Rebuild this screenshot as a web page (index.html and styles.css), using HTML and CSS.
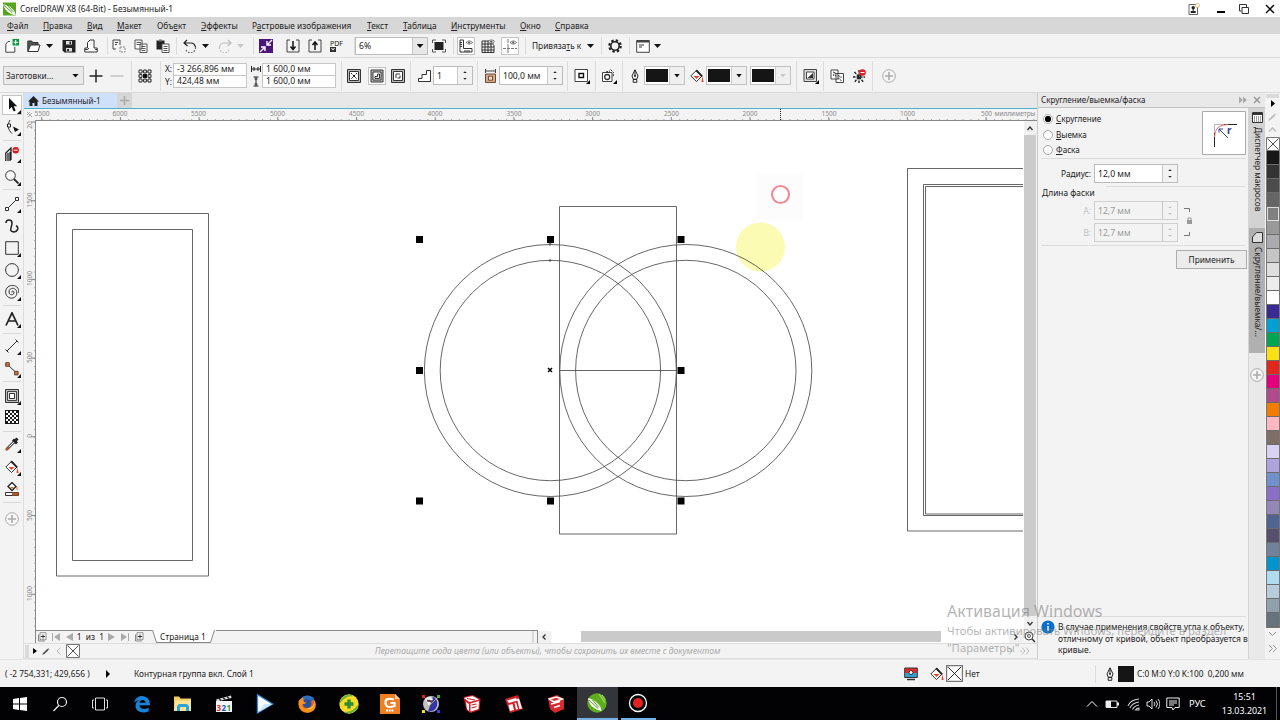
FILE: index.html
```html
<!DOCTYPE html>
<html lang="ru">
<head>
  <meta charset="UTF-8" />
  <title>CorelDRAW X8 (64-Bit) - Безымянный-1</title>
  <link rel="stylesheet" href="styles.css">
</head>
<body>

  <!-- Shared icons -->
  <svg class="defs">
    <symbol id="pen" viewBox="0 0 14 14"><path d="M7 .8L4 7l1.300 3.200h3.400L10 7zM7 1v6M5.200 10.500v2.800h3.600v-2.800z" fill="#f8f8f8" stroke="#222"/><circle cx="7" cy="7" r="1" fill="#222"/></symbol>
    <symbol id="bucket" viewBox="0 0 14 14"><path d="M.8 7l6-6L12 7l-5.500 5.500z" fill="#fff" stroke="#333"/><path d="M6.500.5L13 7l-1.600 1L5.500 2z" fill="#222"/><path d="M3.500 7h6L6.500 10z" fill="#e4472b"/><path d="M12.200 7.500l1.500 5.500h-2.200z" fill="#e4472b"/></symbol>
    <symbol id="plus-circle" viewBox="0 0 14 14"><circle cx="7" cy="7" r="6.300" fill="#f6f6f6" stroke="#aaa"/><path d="M7 3v8M3 7h8" stroke="#aaa" stroke-width="1.600"/></symbol>
    <symbol id="no-color" viewBox="0 0 14 14"><path d="M.5.5h13v13H.5z" fill="#fff" stroke="#777"/><path d="M1.500 1.500l11 11M12.500 1.500l-11 11" stroke="#222" stroke-width=".8"/></symbol>
    <symbol id="eye" viewBox="0 0 8 5"><path d="M.5 2.500Q4-1 7.500 2.500Q4 6 .5 2.500z" fill="#fff" stroke="#555" stroke-width=".8"/><circle cx="4" cy="2.500" r="1.200" fill="#555"/></symbol>
    <symbol id="pencil" viewBox="0 0 10 10"><path d="M.8 9.200L2.500 7 7 2.500 8 3.500 3.500 8zM7.500 1.500l1.500 1.500" fill="currentColor" stroke="currentColor" stroke-width=".8"/></symbol>
    <symbol id="addpage" viewBox="0 0 10 10"><path d="M1.500 2.500v6.500h6.500" fill="none" stroke="#888"/><path d="M3 .7h6v7H3z" fill="#fafafa" stroke="#777" stroke-width=".8"/><path d="M6 2.500v4M4 4.500h4" stroke="#333"/></symbol>
  </svg>

  <!-- Title bar -->
  <div class="titlebar">
    <svg class="logo" viewBox="0 0 14 14"><path d="M0 0h14v14H0z" fill="#56a51f"/><path d="M0 2Q7 3 12 9l2 5-6-2Q2 9 0 2z" fill="#fff"/><path d="M1 3l9 8M4 2.500l7 7.500" stroke="#4a961b"/></svg>
    <span class="app-name">CorelDRAW X8 (64-Bit) - Безымянный-1</span>
    <div class="window-buttons">
      <svg width="12" height="12" viewBox="0 0 12 12"><path d="M1 1.500h8.500v10H1z" fill="#fff" stroke="#666"/><circle cx="5.200" cy="4.700" r="1.700" fill="#222"/><path d="M4.700 5h1v3h2v2h-5V8h2z" fill="#222"/><circle cx="9.500" cy="2.500" r="2" fill="#fff" stroke="#e8913b" stroke-dasharray="1 .5"/></svg>
      <svg class="minimize" width="10" height="10" viewBox="0 0 10 10"><path d="M1 8h8" stroke="#000" stroke-width="2"/></svg>
      <svg width="12" height="12" viewBox="0 0 12 12"><path d="M3.500 8H1.500V1.500h7V4M4 4.500h6.500v6H4z" fill="#fff" stroke="#333"/></svg>
      <svg width="10" height="10" viewBox="0 0 10 10"><path d="M1 1l8 8M9 1L1 9" stroke="#000" stroke-width="1.400"/></svg>
    </div>
  </div>

  <!-- Menu -->
  <div class="menu">
    <span><u>Ф</u>айл</span><span><u>П</u>равка</span><span><u>В</u>ид</span><span><u>М</u>акет</span><span>Объ<u>е</u>кт</span><span><u>Э</u>ффекты</span><span>Р<u>а</u>стровые изображения</span><span><u>Т</u>екст</span><span><u>Т</u>аблица</span><span><u>И</u>нструменты</span><span><u>О</u>кно</span><span><u>С</u>правка</span>
  </div>

  <!-- Standard toolbar -->
  <div class="bar toolbar">
    <svg class="ic" viewBox="0 0 14 14"><path d="M5 2.500H3L.8 5v8.200h9V8" fill="#fff" stroke="#444"/><path d="M7.500 0H14v6.500H7.500z" fill="#0d9545"/><path d="M10.700 1v4.500M8.500 3.200H13" stroke="#fff"/></svg>
    <svg class="ic" viewBox="0 0 14 14"><path d="M.8 12.500V2h4l1 1.500H11V6" fill="#555" stroke="#333"/><path d="M3.500 6H13l-2 6.500H1z" fill="#fff" stroke="#333"/></svg>
    <i class="caret"></i>
    <svg class="ic" viewBox="0 0 14 14"><path d="M.5 1h13v12.500h-11l-2-2z" fill="#222"/><path d="M4 2h6v3.500H4zM4 9h6v3.500H4z" fill="#ddd"/><path d="M7.500 2.500h1.500v2.500H7.500zM5 10h2v2H5z" fill="#222"/></svg>
    <svg class="ic" viewBox="0 0 14 14"><path d="M3.500 9V3.500L6 1h4v8M3.500 9H.8v4h12.400V9H10M.8 10.500h3L5 9M13.200 10.500h-2" fill="#fff" stroke="#333"/></svg>
    <i class="sep"></i>
    <svg class="ic" viewBox="0 0 14 14"><path d="M1 10V1h7v5M3 3.500h3M3 5.500h2M1 10h3" fill="none" stroke="#444"/><path d="M8 8h5v5H8z" fill="none" stroke="#888" stroke-dasharray="2 1"/></svg>
    <svg class="ic" viewBox="0 0 14 14"><path d="M1 1h7v9H1zM2.500 3.500H7M2.500 5.500H7M6 5h7v8.500H6zM7.500 7.500h4M7.500 9.500h4M7.500 11.500h4" fill="#fff" stroke="#555"/></svg>
    <svg class="ic" viewBox="0 0 14 14"><path d="M.5 1.500h8v9h-8z" fill="#222"/><path d="M3 .5h3v2H3z" fill="#777"/><path d="M6 5h7v8.500H6zM7.500 7.500h4M7.500 9.500h4M7.500 11.500h4" fill="#fff" stroke="#555"/></svg>
    <i class="sep"></i>
    <svg class="ic" viewBox="0 0 14 14"><path d="M4 1L1 4l3.500 3M1.500 4H8a4.500 4.500 0 0 1 4.500 4.500" fill="none" stroke="#222" stroke-width="1.200"/><path d="M12.500 8.500A5 5 0 0 1 3 11" fill="none" stroke="#555" stroke-width="1.200" stroke-dasharray="1.500 1.500"/></svg>
    <i class="caret"></i>
    <svg class="ic" viewBox="0 0 14 14"><path d="M10 1l3 3-3.500 3M12.500 4H6a4.500 4.500 0 0 0-4.500 4.500" fill="none" stroke="#bbb" stroke-width="1.200"/><path d="M1.500 8.500A5 5 0 0 0 11 11" fill="none" stroke="#bbb" stroke-width="1.200" stroke-dasharray="1.500 1.500"/></svg>
    <i class="caret off"></i>
    <i class="sep"></i>
    <svg class="ic" viewBox="0 0 14 14"><path d="M0 0h14v14H0z" fill="#4b1477"/><path d="M13 1L9 5M8 2v4h4M1 13l4-4M2 8h4v4" fill="none" stroke="#fff" stroke-width="1.400"/></svg>
    <svg class="ic" viewBox="0 0 14 14"><path d="M4 1H1v12h12V1h-3" fill="none" stroke="#444"/><path d="M7 2v8M4.500 7.500L7 10.500l2.500-3" fill="none" stroke="#111" stroke-width="1.500"/></svg>
    <svg class="ic" viewBox="0 0 14 14"><path d="M4 1H1v12h12V1h-3" fill="none" stroke="#444"/><path d="M7 11V3M4.500 6L7 3l2.500 3" fill="none" stroke="#111" stroke-width="1.500"/></svg>
    <div class="pdf">PDF<svg width="6" height="5" viewBox="0 0 6 5"><path d="M0 0h6v5H0z" fill="#333"/><path d="M1.500 1l1.500 2 1.500-2" stroke="#fff" fill="none"/></svg></div>
    <i class="sep"></i>
    <div class="field zoom-field"><span>6%</span><b><i class="caret"></i></b></div>
    <svg class="ic" viewBox="0 0 14 14"><path d="M2.500 3h9v8h-9z" fill="#222"/><path d="M.5 4V1H4M10 1h3.500v3M13.500 10v3H10M4 13H.5v-3" fill="none" stroke="#555"/></svg>
    <i class="sep"></i>
    <div class="pressed"><svg class="ic" viewBox="0 0 14 14"><path d="M1 1h3.500v8.500H13V13H1z" fill="#fff" stroke="#333"/><path d="M1 3.500h2M1 5.500h2M1 7.500h2M6 13v-2M8 13v-2M10 13v-2" stroke="#333"/><use href="#eye" x="6.500" y="1" width="7.500" height="5"/></svg></div>
    <svg class="ic" viewBox="0 0 14 14"><path d="M1 2v11.500M4 2v11.500M7 2v11.500M10 2v11.500M13 6v7.500M1 2h12M1 5h12M1 8h12M1 11h12M1 13.500h12" stroke="#333"/><use href="#eye" x="6.500" y="0" width="7.500" height="5"/></svg>
    <div class="pressed"><svg class="ic" viewBox="0 0 14 14"><path d="M5 0v14" stroke="#777" stroke-dasharray="4 1"/><path d="M0 9.500h14" stroke="#777" stroke-dasharray="3 1"/><use href="#eye" x="6.500" y="1" width="7.500" height="5"/></svg></div>
    <i class="sep"></i>
    <span class="snap">Привяза<u>т</u>ь к</span>
    <i class="caret"></i>
    <i class="sep"></i>
    <svg class="ic" viewBox="0 0 14 14"><circle cx="7" cy="7" r="5.700" fill="none" stroke="#222" stroke-width="2.200" stroke-dasharray="2.400 2.080"/><circle cx="7" cy="7" r="4.200" fill="none" stroke="#222" stroke-width="1.600"/></svg>
    <i class="sep"></i>
    <svg class="ic" viewBox="0 0 14 14"><path d="M.7 1.500h12.600v11.800H.7z" fill="#fff" stroke="#444"/><path d="M.7 2.500h12.600" stroke="#444" stroke-width="2"/><path d="M3 6h5M3 8h3" stroke="#333"/></svg>
    <i class="caret"></i>
  </div>

  <!-- Property bar -->
  <div class="bar props">
    <div class="preset"><span>Заготовки...</span><i class="caret"></i></div>
    <svg class="ic" viewBox="0 0 14 14"><path d="M7 .5v13M.5 7h13" stroke="#222" stroke-width="1.500"/></svg>
    <svg class="ic" viewBox="0 0 14 14"><path d="M.5 7h13" stroke="#b5b5b5" stroke-width="1.200"/></svg>
    <i class="sep"></i>
    <svg class="ic" viewBox="0 0 14 14"><path d="M2.500 2.500h9v9h-9z" fill="none" stroke="#222" stroke-dasharray="1 1"/><path d="M1 1h3v3H1zM5.700 1h2.600v3H5.700zM10 1h3v3h-3zM1 5.700h3v2.600H1zM10 5.700h3v2.600h-3zM1 10h3v3H1zM5.700 10h2.600v3H5.700zM10 10h3v3h-3z" fill="#fff" stroke="#222"/><path d="M5 5h4v4H5z" fill="#111"/></svg>
    <i class="sep"></i>
    <div class="pair"><span>X:</span><em>-3 266,896 мм</em><span>Y:</span><em>424,48 мм</em></div>
    <div class="pair size">
      <svg width="10" height="8" viewBox="0 0 10 8"><path d="M.5 1v6M9.500 1v6M1 4h8M3 2v4M7 2v4" stroke="#222"/></svg><em>1 600,0 мм</em>
      <svg width="10" height="11" viewBox="0 0 10 11"><path d="M2.500 1h5M2.500 10h5M5 1v9M3.500 3h3M3.500 8h3" stroke="#222"/></svg><em>1 600,0 мм</em>
    </div>
    <i class="sep"></i>
    <svg class="ic" viewBox="0 0 14 14"><path d="M.5.5h13v13H.5z" fill="#bbb" stroke="#333"/><path d="M2.500 2.500h9v9h-9z" fill="#fff" stroke="#333"/><path d="M4 4l6 6M10 4l-6 6" stroke="#222" stroke-dasharray="2 1"/><path d="M6 6h2v2H6z" fill="#222"/></svg>
    <div class="pressed"><svg class="ic" viewBox="0 0 14 14"><path d="M1 1h12v12H1z" fill="#bbb" stroke="#333"/><path d="M3 3h8v8H3z" fill="#fff" stroke="#333"/><path d="M5 9.500h4.500V5H7.500v2.500H5z" fill="#eee" stroke="#333"/></svg></div>
    <svg class="ic" viewBox="0 0 14 14"><path d="M.5.5h13v13H.5z" fill="#bbb" stroke="#333"/><path d="M2.500 2.500h9v9h-9z" fill="#fff" stroke="#333"/><path d="M5 9V5h4M9 6.500V9H6.500" fill="none" stroke="#333"/></svg>
    <i class="sep"></i>
    <svg class="ic" viewBox="0 0 14 14"><path d="M.5 12.500V9.500H4V5.500h4.500v-4h4v11z" fill="#fff" stroke="#333"/></svg>
    <div class="field spin steps"><span>1</span><b></b></div>
    <i class="sep"></i>
    <svg class="ic" viewBox="0 0 14 14"><path d="M1.500 0v4M11.500 0v4M2 2h9" stroke="#444"/><path d="M1.500 5h10v8.500h-10z" fill="#d9a983" stroke="#6a4a3c"/><path d="M4.500 7.200h4v4h-4z" fill="#f4dccb" stroke="#6a4a3c"/></svg>
    <div class="field spin offset"><span>100,0 мм</span><b></b></div>
    <i class="sep"></i>
    <svg class="ic fly-ic" viewBox="0 0 16 16"><path d="M1 1.500h12.500v12H1z" fill="#fff" stroke="#444"/><path d="M5 5.500h4.500v4H5z" fill="#fff" stroke="#111" stroke-width="1.400"/><path d="M16 12v4h-4z"/></svg>
    <i class="sep"></i>
    <svg class="ic fly-ic" viewBox="0 0 16 16"><path d="M1.500 4.500h9.500v9H1.500z" fill="#fff" stroke="#444"/><circle cx="6.200" cy="9" r="2.500" fill="none" stroke="#333" stroke-width="1.300"/><path d="M5 4l4-1M9.500 1.500l3 3L12 9" fill="none" stroke="#222" stroke-dasharray="2 1"/><path d="M16 12v4h-4z"/></svg>
    <i class="sep"></i>
    <svg class="ic"><use href="#pen"/></svg>
    <div class="color"><s></s><b><i class="caret"></i></b></div>
    <svg class="ic"><use href="#bucket"/></svg>
    <div class="color"><s></s><b><i class="caret"></i></b></div>
    <div class="color disabled"><s></s><b><i class="caret off"></i></b></div>
    <i class="sep"></i>
    <svg class="ic fly-ic" viewBox="0 0 16 16"><path d="M1 1.500h12.500v12H1z" fill="#ddd" stroke="#444"/><path d="M3.500 4h7.500v7H3.500z" fill="#fff" stroke="#444"/><path d="M10 5v5H4.500z" fill="#333"/><path d="M16 12v4h-4z"/></svg>
    <i class="sep"></i>
    <svg class="ic" viewBox="0 0 14 14"><path d="M1 1h7v9H1zM6 4.500h7.500v9H6z" fill="#fff" stroke="#444"/><path d="M3 3l3 1-3 2 3 1M8 6.500l3.500 1.500-3 2 3 1.500" fill="none" stroke="#333" stroke-dasharray="2 1"/></svg>
    <svg class="ic" viewBox="0 0 14 14"><path d="M7 1v13M1 8h12M2.500 3l9 10M11.500 3l-9 10" stroke="#222" stroke-width="1.400" stroke-dasharray="2.500 1"/><circle cx="10.500" cy="3.500" r="3.300" fill="#e01b22"/><path d="M8.500 3.500h4" stroke="#fff"/></svg>
    <i class="sep"></i>
    <svg class="ic"><use href="#plus-circle"/></svg>
  </div>

  <div class="workspace">
    <!-- Toolbox -->
    <div class="toolbox">
      <div class="tool active fly"><svg class="ic" viewBox="0 0 14 14"><path d="M4 0v11.500l2.700-2.500 2 4.500 2-1-2-4.200h3.500z" fill="#111"/></svg></div>
      <div class="tool fly"><svg class="ic" viewBox="0 0 14 14"><path d="M5 0C2 5 3 10 7 13.500" fill="none" stroke="#333"/><path d="M2.500 4h3v3h-3z" fill="#fff" stroke="#222"/><path d="M8 6.500l6 3-4 2.500z" fill="#111"/></svg></div>
      <i class="hsep"></i>
      <div class="tool fly"><svg class="ic" viewBox="0 0 14 14"><path d="M.8 14V6L6 1v12M3 14V6M5 14V5" fill="none" stroke="#222" stroke-width="1.300"/><circle cx="10.700" cy="3.200" r="3.200" fill="#d81920"/><path d="M8.700 3.200h4" stroke="#fff"/></svg></div>
      <div class="tool fly"><svg class="ic" viewBox="0 0 14 14"><circle cx="5.500" cy="5.500" r="4.800" fill="#fafafa" stroke="#333"/><path d="M9 9l4.500 4.500" stroke="#222" stroke-width="1.800"/></svg></div>
      <i class="hsep"></i>
      <div class="tool fly"><svg class="ic" viewBox="0 0 14 14"><path d="M2 12L12 2" stroke="#333"/><path d="M.5 10.500h3v3h-3zM10.500.5h3v3h-3z" fill="#fff" stroke="#333"/></svg></div>
      <div class="tool"><svg class="ic" viewBox="0 0 14 14"><path d="M1 4C1 0 7 0 7 4S3.500 12 8 12.800s6.500-4.500 3-6" fill="none" stroke="#222" stroke-width="1.500"/></svg></div>
      <div class="tool fly"><svg class="ic" viewBox="0 0 14 14"><path d="M.7.7h12.600v12.600H.7z" fill="none" stroke="#333"/></svg></div>
      <div class="tool fly"><svg class="ic" viewBox="0 0 14 14"><circle cx="7" cy="7" r="6.400" fill="none" stroke="#333"/></svg></div>
      <div class="tool fly"><svg class="ic" viewBox="0 0 14 14"><path d="M7 7.500C6 5.500 9.500 5.500 9 8S4 10.500 4 7s4-5 6.500-2.500S12 12 8 13 0 10.500.7 6 6-.5 9.500.7s4.500 4 4 7" fill="none" stroke="#333"/></svg></div>
      <i class="hsep"></i>
      <div class="tool fly"><svg class="ic" viewBox="0 0 14 14"><path d="M1 13.500L7 .8l6 12.700M3.300 9h7.400" fill="none" stroke="#222" stroke-width="1.700"/></svg></div>
      <i class="hsep"></i>
      <div class="tool fly"><svg class="ic" viewBox="0 0 14 14"><path d="M2 12L12 2M.5 10.500l3 3M10.500.5l3 3" stroke="#333"/></svg></div>
      <div class="tool fly"><svg class="ic" viewBox="0 0 14 14"><path d="M2 2l10 9.500" stroke="#333"/><path d="M.7.700h3.600v3.600H.7zM9.500 9.300h3.600v3.600H9.500z" fill="#c8723e" stroke="#6b4530"/></svg></div>
      <i class="hsep"></i>
      <div class="tool fly"><svg class="ic" viewBox="0 0 14 14"><path d="M.5.5h13v13H.5z" fill="#bbb" stroke="#333"/><path d="M2.500 2.500h9v9h-9z" fill="#ddd" stroke="#444"/><path d="M4.500 4.500h5v5h-5z" fill="#fff" stroke="#333"/></svg></div>
      <div class="tool"><svg class="ic" viewBox="0 0 14 14"><defs><pattern id="checks" width="4" height="4" x="1" y="1" patternUnits="userSpaceOnUse"><path d="M0 0h2v2H0zM2 2h2v2H2z" fill="#fff"/></pattern></defs><path d="M0 0h14v14H0z" fill="#1a1a1a"/><path d="M1 1h12v12H1z" fill="url(#checks)"/></svg></div>
      <i class="hsep"></i>
      <div class="tool fly"><svg class="ic" viewBox="0 0 14 14"><path d="M1.500 12.500L9 5" stroke="#555" stroke-width="3"/><path d="M3.500 10.500L9 5" stroke="#fff"/><path d="M8 2.500l4 4M9 5l3.500-3.500" stroke="#222" stroke-width="3"/><path d="M.8 13.200l3-3" stroke="#b5562a" stroke-width="2"/></svg></div>
      <div class="tool fly"><svg class="ic"><use href="#bucket"/></svg></div>
      <div class="tool"><svg class="ic" viewBox="0 0 14 14"><path d="M3 4.500L7 .5l4 4-4 4z" fill="#fff" stroke="#222" stroke-width="1.300"/><path d="M5 5h4L7 7z" fill="#d76628"/><path d="M12 5v3" stroke="#d76628"/><path d="M.5 10.500h13v3H.5z" fill="#fff" stroke="#333"/><path d="M7 10.500h6.500v3H7z" fill="#b5562a"/></svg></div>
      <i class="hsep"></i>
      <svg class="ic"><use href="#plus-circle"/></svg>
    </div>

    <!-- Document -->
    <div class="document">
      <div class="tabs">
        <div class="tab"><svg width="11" height="10" viewBox="0 0 11 10"><path d="M0 5.500L5.500 0 11 5.500H9.500V10h-3V7h-2v3h-3V5.500z" fill="#222"/></svg>Безымянный-1</div>
        <div class="tab-add"><svg width="9" height="9" viewBox="0 0 9 9"><path d="M4.500 0v9M0 4.500h9" stroke="#aaa" stroke-width="1.600"/></svg></div>
      </div>
      <svg class="ruler-top" viewBox="24 109 1013 12">
        <defs>
          <pattern id="ticks-x" x="41.700" y="118" width="7.870" height="3" patternUnits="userSpaceOnUse"><path d="M.5 1v2" stroke="#aaa"/></pattern>
          <pattern id="major-x" x="41.200" y="116" width="78.700" height="5" patternUnits="userSpaceOnUse"><path d="M.5 1v4" stroke="#888"/></pattern>
        </defs>
        <path d="M27 112l5 5M27 115l3-3M28 117l4-4" stroke="#999" stroke-width=".8" fill="none"/>
        <rect x="36" y="118" width="1000" height="3" fill="url(#ticks-x)"/>
        <rect x="36" y="116" width="1000" height="5" fill="url(#major-x)"/>
        <path d="M35 120.500h1002" stroke="#888"/>
        <g class="ruler-text">
          <text x="42">5500</text><text x="120">6000</text><text x="198.500">5500</text><text x="277.500">5000</text><text x="356.500">4500</text><text x="435">4000</text><text x="514">3500</text><text x="592.500">3000</text><text x="671.500">2500</text><text x="750">2000</text><text x="829">1500</text><text x="907.500">1000</text><text x="986.500">500</text><text x="1015">миллиметры</text>
        </g>
        <path d="M780.500 109v12" stroke="#222" stroke-dasharray="1 1"/>
      </svg>
      <div class="canvas-row">
        <svg class="ruler-left" viewBox="24 121 12 509">
          <defs>
            <pattern id="ticks-y" x="33" y="122" width="3" height="7.870" patternUnits="userSpaceOnUse"><path d="M1 .5h2" stroke="#aaa"/></pattern>
            <pattern id="major-y" x="31" y="121.500" width="5" height="78.700" patternUnits="userSpaceOnUse"><path d="M0 .5h5" stroke="#888"/></pattern>
          </defs>
          <rect x="33" y="121" width="3" height="509" fill="url(#ticks-y)"/>
          <rect x="31" y="121" width="5" height="509" fill="url(#major-y)"/>
          <path d="M35.500 121v509" stroke="#888"/>
          <g class="ruler-text">
            <text transform="translate(31.500 125) rotate(-90)">20</text><text transform="translate(31.500 200) rotate(-90)">1500</text><text transform="translate(31.500 278.500) rotate(-90)">1000</text><text transform="translate(31.500 357.500) rotate(-90)">500</text><text transform="translate(31.500 436) rotate(-90)">0</text><text transform="translate(31.500 515.500) rotate(-90)">500</text><text transform="translate(31.500 593.500) rotate(-90)">1000</text>
          </g>
        </svg>
        <svg class="canvas" viewBox="36 121 988 509">
          <path d="M756 174h47v46h-47z" fill="#fcfcfc"/>
          <circle cx="760.500" cy="247" r="24.500" fill="#fbfbb4"/>
          <g class="shapes">
            <path d="M56.500 213.500h152v362.500h-152zM72.500 229.500h120v331h-120z"/>
            <path d="M559.500 206.500h117v327.500h-117zM559.500 370.500h117"/>
            <circle cx="550.400" cy="370.500" r="126"/><circle cx="550.400" cy="370.500" r="110.200"/>
            <circle cx="685.800" cy="370.500" r="126"/><circle cx="685.800" cy="370.500" r="110.200"/>
            <path d="M1023 168.500H907.500v362.500H1023M1023 184.500H923.500v331H1023M1023 186.500H925.500v327.500H1023"/>
          </g>
          <path d="M416 236h7v7h-7zM547 236h7v7h-7zM677.500 236h7v7h-7zM416 367h7v7h-7zM677.500 367h7v7h-7zM416 497.500h7v7h-7zM547 497.500h7v7h-7zM677.500 497.500h7v7h-7z"/>
          <path d="M548 368l4 4M552 368l-4 4" stroke="#000" stroke-width="1.500"/>
          <path d="M548.500 244h3M548.500 260.500h3M550 243v3M550 259v3" stroke="#555"/>
          <circle cx="780.500" cy="194.500" r="8.500" fill="#fff" stroke="#f08d94" stroke-width="2.200"/>
        </svg>
        <div class="vscroll">
          <svg width="12" height="14" viewBox="0 0 12 14"><path d="M3.500 9L6 6l2.500 3" fill="none" stroke="#333" stroke-width="1.300"/></svg>
          <i></i>
          <svg width="12" height="14" viewBox="0 0 12 14"><path d="M3.500 6L6 9l2.500-3" fill="none" stroke="#333" stroke-width="1.300"/></svg>
        </div>
      </div>
      <div class="page-row">
        <div class="page-nav">
          <svg width="10" height="10"><use href="#addpage"/></svg>
          <svg width="10" height="8" viewBox="0 0 10 8"><path d="M1.500 0v8" stroke="#aaa"/><path d="M9 0v8L3 4z" fill="#aaa"/></svg>
          <svg width="7" height="8" viewBox="0 0 7 8"><path d="M7 0v8L0 4z" fill="#aaa"/></svg>
          <span>1&nbsp; из&nbsp; 1</span>
          <svg width="7" height="8" viewBox="0 0 7 8"><path d="M0 0v8l7-4z" fill="#aaa"/></svg>
          <svg width="10" height="8" viewBox="0 0 10 8"><path d="M8.500 0v8" stroke="#aaa"/><path d="M1 0v8l6-4z" fill="#aaa"/></svg>
          <svg width="10" height="10"><use href="#addpage"/></svg>
        </div>
        <div class="page-tab">
          <svg width="64" height="13" viewBox="0 0 64 13"><path d="M0 0l4 12.500h54L62.500 0z" fill="#fff"/><path d="M.5 0l4 12.500h54L62.500 0" fill="none" stroke="#888"/><text x="8" y="10">Страница 1</text></svg>
        </div>
        <i class="grip"></i>
        <div class="hscroll">
          <svg width="13" height="12" viewBox="0 0 13 12"><path d="M7.500 3.500L5 6l2.500 2.500" fill="none" stroke="#333" stroke-width="1.300"/></svg>
          <i></i>
          <svg width="13" height="12" viewBox="0 0 13 12"><path d="M5.500 3.500L8 6 5.500 8.500" fill="none" stroke="#333" stroke-width="1.300"/></svg>
        </div>
        <svg class="navigator" viewBox="0 0 12 12"><circle cx="5" cy="5" r="4" fill="#fff" stroke="#444"/><circle cx="5" cy="5" r="1.500" fill="none" stroke="#555"/><path d="M8 8l3 3" stroke="#333" stroke-width="1.400"/></svg>
      </div>
      <div class="color-row">
        <i class="grip"></i>
        <svg width="4" height="6" viewBox="0 0 4 6"><path d="M0 0v6l4-3z"/></svg>
        <svg class="pencil" width="8" height="8"><use href="#pencil"/></svg>
        <svg width="5" height="8" viewBox="0 0 5 8"><path d="M4.500.5L1 4l3.500 3.500" fill="none" stroke="#bbb"/></svg>
        <svg class="ic"><use href="#no-color"/></svg>
        <em>Перетащите сюда цвета (или объекты), чтобы сохранить их вместе с документом</em>
        <svg width="22" height="8" viewBox="0 0 22 8"><path d="M1 .5L4 4 1 7.500M14 .5L17 4l-3 3.500M18 .5L21 4l-3 3.500" fill="none" stroke="#bbb"/></svg>
      </div>
    </div>

    <!-- Docker -->
    <div class="docker">
      <div class="docker-title"><span>Скругление/выемка/фаска</span>
        <svg width="8" height="8" viewBox="0 0 8 8"><path d="M0 .5v7L4 4zM4 .5v7L8 4z" fill="#aaa"/></svg>
        <svg width="8" height="8" viewBox="0 0 8 8"><path d="M1 1l6 6M7 1L1 7" stroke="#999" stroke-width="1.500"/></svg>
      </div>
      <div class="mode">
        <div class="radios">
          <label><i class="radio on"></i><span><u>С</u>кругление</span></label>
          <label><i class="radio"></i><span><u>В</u>ыемка</span></label>
          <label><i class="radio"></i><span><u>Ф</u>аска</span></label>
        </div>
        <svg class="preview" viewBox="0 0 44 44"><path d="M.5.5h43v43H.5z" fill="#fff" stroke="#aaa"/><path d="M12.500 36V22M22 13.500h13" stroke="#222" fill="none"/><path d="M12.500 22v-8.500H22" fill="none" stroke="#999" stroke-width=".7"/><path d="M12.500 26Q12.500 13.500 26 13.500" fill="none" stroke="#e46a6a"/><path d="M26 27l-9-9M17 21.500V18h4" fill="none" stroke="#2b3f9b"/><text x="25" y="23">r</text></svg>
      </div>
      <div class="radius"><span>Радиус:</span><div class="field spin"><span>12,0 мм</span><b></b></div></div>
      <div class="group-title"><span>Длина фаски</span></div>
      <div class="lengths">
        <span>A:</span><div class="field spin disabled"><span>12,7 мм</span><b></b></div>
        <span>B:</span><div class="field spin disabled"><span>12,7 мм</span><b></b></div>
        <svg class="lock" viewBox="0 0 10 30"><path d="M0 1.500h5.500V5M0 28.500h5.500V25" fill="none" stroke="#777"/><path d="M3 13h5v4H3z" fill="#999"/><path d="M4 13v-2h3v2" fill="none" stroke="#999"/></svg>
      </div>
      <div class="apply"><button>Применить</button></div>
      <div class="hint">
        <svg width="14" height="14" viewBox="0 0 14 14"><circle cx="7" cy="7" r="6.600" fill="#0a6fc9"/><path d="M7 6v5M7 3v1.600" stroke="#fff" stroke-width="1.400"/></svg>
        <p>В случае применения свойств угла к объекту,<br>отличному от кривой, объект преобразуется в<br>кривые.</p>
      </div>
    </div>

    <div class="docker-tabs">
      <div class="dtab"><svg width="11" height="11" viewBox="0 0 11 11"><path d="M.5.5h10v10H.5z" fill="#fff" stroke="#333"/><path d="M.5 2h10" stroke="#333" stroke-width="2"/><path d="M2 5h7M2 7h7M2 9h7" stroke="#444" stroke-dasharray="1 1"/></svg><span>Диспетчер макросов</span></div>
      <div class="dtab current"><svg width="11" height="11" viewBox="0 0 11 11"><path d="M4.500.5h6v10H.5V5z" fill="#ddd" stroke="#333"/></svg><span>Скругление/выемка/...</span></div>
      <svg class="ic"><use href="#plus-circle"/></svg>
    </div>

    <!-- Palette -->
    <div class="palette">
      <i class="grip"></i>
      <svg width="13" height="9" viewBox="0 0 13 9"><path d="M5 1v7l4-3.500z"/></svg>
      <svg class="pencil" width="9" height="9"><use href="#pencil"/></svg>
      <svg width="9" height="9" viewBox="0 0 9 9"><path d="M1 6.500L4.500 3 8 6.500" fill="none" stroke="#bbb" stroke-width="1.300"/></svg>
      <svg class="ic"><use href="#no-color"/></svg>
      <div class="swatches">
        <i style="background:#171717"></i><i style="background:#333333"></i><i style="background:#4b4b4b"></i><i style="background:#666666"></i><i class="picked" style="background:#808080"></i><i style="background:#999999"></i><i style="background:#ababaf"></i><i style="background:#c5c5c5"></i><i style="background:#dedede"></i><i style="background:#ececec"></i><i style="background:#ffffff"></i>
        <i style="background:#3a2a96"></i><i style="background:#00a0d2"></i><i style="background:#00a651"></i><i style="background:#fbe013"></i><i style="background:#e1261c"></i><i style="background:#e2007f"></i><i style="background:#b04a8c"></i><i style="background:#f07d00"></i><i style="background:#ffb8bf"></i><i style="background:#7d6e66"></i><i style="background:#dad2f2"></i><i style="background:#aea3dd"></i><i style="background:#7092cc"></i><i style="background:#8a6fc8"></i><i style="background:#9387b8"></i><i style="background:#4f6490"></i><i style="background:#574f6b"></i><i style="background:#6f8299"></i><i style="background:#0095cf"></i><i style="background:#b0dcf2"></i><i style="background:#b8ccdc"></i><i style="background:#8fa2ab"></i><i style="background:#65747d"></i>
      </div>
      <svg width="9" height="30" viewBox="0 0 9 30"><path d="M1 4l3.500 3.500L8 4M1 17l3.500 3.500L1 24M5 17l3.500 3.500L5 24" fill="none" stroke="#999"/></svg>
    </div>

    <div class="watermark"><strong>Активация Windows</strong><p>Чтобы активировать Windows, перейдите в раздел<br>"Параметры".</p></div>
  </div>

  <!-- Status bar -->
  <div class="status">
    <span>( -2 754,331; 429,656 )</span>
    <svg width="5" height="8" viewBox="0 0 5 8"><path d="M0 0v8l4-4z"/></svg>
    <span>Контурная группа вкл. Слой 1</span>
    <svg class="ic" viewBox="0 0 14 14"><path d="M.7 1h12.600v9.500H.7z" fill="#df2a2f" stroke="#333"/><path d="M1.200 6h11.600v4H1.200z" fill="#2c9fd3"/><circle cx="7" cy="5.500" r="2" fill="#fff" stroke="#333"/><path d="M3 12.500h8" stroke="#333" stroke-width="1.500"/></svg>
    <svg class="ic"><use href="#bucket"/></svg>
    <svg width="17" height="17"><use href="#no-color"/></svg>
    <span>Нет</span>
    <i class="sep"></i>
    <svg class="ic"><use href="#pen"/></svg>
    <s></s>
    <span>C:0 M:0 Y:0 K:100&nbsp; 0,200 мм</span>
  </div>

  <!-- Windows taskbar -->
  <div class="taskbar">
    <div class="apps">
      <svg viewBox="0 0 20 20"><path d="M3 5l6-.9v5.500H3zM10 4l7-1v6.600h-7zM3 10.400h6v5.500L3 15zM10 10.400h7V17l-7-1z" fill="#fff"/></svg>
      <svg viewBox="0 0 20 20"><circle cx="12" cy="8" r="4.500" fill="none" stroke="#eee" stroke-width="1.200"/><path d="M8.800 11.500L3.500 17" stroke="#eee" stroke-width="1.300"/></svg>
      <svg viewBox="0 0 20 20"><path d="M5.500 4h9v12h-9zM4 6H2.500v8H4M16 6h1.500v8H16" fill="none" stroke="#ddd"/></svg>
      <svg viewBox="0 0 20 20"><path d="M2 9C3 4 6.500 2 10 2c5 0 8 3.500 8 9.300H7.500c.3 4 5 4.700 9.200 2.500v3.500C11 20 3.500 18 3.500 11.500 3.500 9 5 7 7.500 6 4.500 6.500 3 7.500 2 9zM7.500 8.700h6C13.500 5 8 5 7.500 8.700z" fill="#1682d8"/></svg>
      <svg viewBox="0 0 20 20"><path d="M1 2.500h5l1.500 2H18V17H1z" fill="#f2cf66"/><path d="M2.500 6.500h15.500V17H1z" fill="#fbe49a"/><path d="M4 17v-5l2-2h8l2 2v5h-3v-4H7v4z" fill="#2ba5dc"/></svg>
      <svg viewBox="0 0 20 20"><path d="M2 7h16v11H2z" fill="#f5f5f5"/><path d="M2 5.500l15-4 .5 2.500L3 7.500z" fill="#ddd"/><path d="M5 4.500l2 2M9 3.500l2 2M13 2.500l2 2" stroke="#222" stroke-width="1.500"/><text class="clip" x="2.500" y="16.500" fill="#d33226">3</text><text class="clip" x="7.500" y="16.500" fill="#2464ae">2</text><text class="clip" x="12.500" y="16.500" fill="#29963e">1</text></svg>
      <svg viewBox="0 0 20 20"><path d="M2.500.8v18L17.500 10z" fill="#fff" stroke="#3390de" stroke-width="1.300"/><path d="M3 18.500L17.500 10H9z" fill="#cbe7fb"/></svg>
      <svg viewBox="0 0 20 20"><circle cx="10" cy="10.500" r="8.500" fill="#e8631d"/><path d="M2 8C5 0 14 0 17.500 5L12 9z" fill="#2d6ec1"/><circle cx="10" cy="9.500" r="4.500" fill="#2a4f9e"/><path d="M1.500 7C1 18 10 20 15 17.500S19 9 17.500 6c0 5-3 8.500-7.500 8.500-4 0-5-2-4.500-4.500 2 .500 3-.5 4-1.500-3 0-3.500-2-3-4.500C3.500 4 3 6 1.500 7z" fill="#f6921e"/><path d="M17.500 6c0 5-3 8.500-7.500 8.500 4 2 8-1.500 7.500-8.500z" fill="#ffd13e"/></svg>
      <svg viewBox="0 0 20 20"><circle cx="10" cy="10" r="9.700" fill="#fadb26"/><path d="M.5 10A9.700 9.700 0 0 1 15 2C8 2 4 5 .5 10zM19.500 10A9.700 9.700 0 0 1 5 18c7 0 11-3 14.500-8z" fill="#6db336"/><path d="M10 5.500v9M5.500 10h9" stroke="#2d8c37" stroke-width="3.300"/></svg>
      <svg viewBox="0 0 20 20"><path d="M0 0h15l5 5v15H0z" fill="#ef8022"/><path d="M15 0l5 5h-5z" fill="#ffd3a8"/><path d="M14 5.500Q5 3 5.500 9t9 3V9h-4" fill="none" stroke="#fff" stroke-width="2.200"/><path d="M6 16.500h8" stroke="#fff" stroke-width="2" stroke-dasharray="2 .7"/></svg>
      <svg viewBox="0 0 20 20"><circle cx="10" cy="10" r="8" fill="#bfc1c8"/><path d="M12 2.500a8 8 0 0 1-5 15z" fill="#3235ac"/><path d="M4 5q4-4 8 0L8 12z" fill="#eee"/><path d="M6 6.500l5 1" stroke="#613545" stroke-width="2"/><path d="M1 1h3v3H1z" fill="#df2222"/><path d="M16 1h3v3h-3z" fill="#3cba33"/><path d="M1 16h3v3H1z" fill="#ede32b"/><path d="M16 16h3v3h-3z" fill="#2848df"/><path d="M3 17L17 3" stroke="#c9c34b" stroke-width=".8"/></svg>
      <svg viewBox="0 0 20 20"><path d="M1.500 3l9-2 8 4-1 11-9 3-4-3z" fill="#cf2229"/><path d="M2 4l8.500-2L17 5.500 7.500 8zM4 8l3 2v7l-2-2z" fill="#fff"/><path d="M8.500 9.500v8l8-2.500.5-8z" fill="#fff"/><path d="M5 4.500l8 1.500M9.500 11l5-1M9.500 14l5-1.500" stroke="#cf2229" stroke-width="1.200"/></svg>
      <svg viewBox="0 0 20 20"><path d="M1 5l13-4 5 14-13 4z" fill="#cf2229"/><path d="M3 6.500l9-2.500 1.500 2.500L5 9zM4.500 11l4-1 1.500 6-4 1zM13 5l2-.5 3 10-2.500.5zM10.500 9l1.500-.5 2 6.500-2 .5z" fill="#fff"/></svg>
      <svg viewBox="0 0 20 20"><path d="M2 4l9-3 7 4v10l-9 4-5-4z" fill="#dc2930"/><path d="M3.500 5l7-2 5.500 2-8 3zM5 10l9-2.500M8 13.500l6-2" fill="none" stroke="#fff" stroke-width="1.600"/></svg>
      <div class="running current"><svg viewBox="0 0 20 20"><circle cx="10" cy="10" r="9.700" fill="#5fac1d"/><path d="M1 5Q9 7 13.500 14l1 4-5-1.500Q2 13 1 5z" fill="#fff"/><path d="M2 7l9 8.500M5 6.500l7 8" stroke="#4f9b17"/><path d="M12 1l6 9M15 2l3 5" stroke="#9cd067" stroke-width="1.300"/></svg></div>
      <div class="running rec"><svg viewBox="0 0 20 20"><circle cx="10" cy="10" r="8.500" fill="#050505" stroke="#fff" stroke-width="1.300"/><circle cx="10" cy="10" r="5" fill="#e32323"/></svg></div>
    </div>
    <div class="tray">
      <svg viewBox="0 0 14 14"><path d="M2 9.500L7 4.500l5 5" fill="none" stroke="#fff"/></svg>
      <svg viewBox="0 0 14 14"><path d="M1 4h11v6.500H1z" fill="none" stroke="#ddd"/><path d="M1 4h5v6.500H1zM12 5.500h2v3h-2z" fill="#eee"/></svg>
      <svg viewBox="0 0 14 14"><path d="M2 9Q4 3 13 2M4 11Q6 6 13 5M6.500 12.500Q8 9 13 8M9.500 13q1-2 3.500-2v2z" fill="none" stroke="#ccc" stroke-width="1.100"/></svg>
      <svg viewBox="0 0 14 14"><path d="M1 5h2l3-3v10L3 9H1zM8 5q2 2 0 4M10 3.500q3 3.500 0 7M12 2q4 5 0 10" fill="none" stroke="#ddd"/></svg>
      <svg viewBox="0 0 14 14"><path d="M.8 1h12.400v9.500H9L7 13l-1-2.500H.8zM3 4h8M3 6h8M3 8h5" fill="none" stroke="#eee"/></svg>
      <span>РУС</span>
      <div class="clock">15:51<br>13.03.2021</div>
      <i></i>
    </div>
  </div>

</body>
</html>
```

FILE: styles.css
```css
* {
  box-sizing: border-box;
}

body {
  margin: 0;
  width: 1280px;
  height: 720px;
  overflow: hidden;
  display: flex;
  flex-direction: column;
  background: #f3f3f3;
  color: #222;
  font-family: "Noto Sans", "Open Sans", sans-serif;
  font-size: 8.3px;
  line-height: 12px;
  white-space: nowrap;
}

svg {
  display: block;
  flex: none;
}

u {
  text-underline-offset: 1px;
}

.defs {
  position: absolute;
  width: 0;
  height: 0;
}

.ic {
  width: 14px;
  height: 14px;
}

.fly-ic {
  width: 16px;
  height: 16px;
}

.caret {
  display: block;
  width: 7px;
  height: 4px;
  background: #111;
  clip-path: polygon(0 0, 100% 0, 50% 100%);
}

.caret.off {
  background: #c8c8c8;
}

.grip {
  display: block;
  background-image: radial-gradient(#bbb 0.6px, transparent 0.8px);
  background-size: 2px 2px;
}

/* Title and menu */
.titlebar {
  height: 17px;
  display: flex;
  align-items: center;
  background: #fff;
  padding: 1px 5px 0 3px;
}

.logo {
  width: 13px;
  height: 14px;
}

.app-name {
  flex: 1;
  padding-left: 4px;
}

.window-buttons {
  display: flex;
  align-items: center;
  gap: 15px;
}

.minimize {
  margin: 0 -3px 0 1px;
}

.menu {
  height: 17px;
  background: #d7d7d7;
  padding: 1px 0 0 7px;
  display: grid;
  align-items: center;
  grid-template-columns: 36px 44px 30px 40px 44px 51px 115px 36px 48px 69px 35px 40px;
}

/* Toolbars */
.bar {
  display: grid;
  align-items: center;
  border-bottom: 1px solid #d9d9d9;
}

.toolbar {
  height: 24px;
  padding: 1px 0 0 5px;
  grid-template-columns: 22px 19px 16px 22px 23px 5px 22px 22px 20px 7px 19px 16px 19px 16px 6px 27px 22px 22px 24px 1px 77px 21px 4px 24px 20px 24px 7px 55px 14px 7px 21px 7px 18px 10px;
}

.props {
  height: 35px;
  padding: 1px 0 0 3px;
  grid-template-columns: 86px 21px 21px 7px 22px 5px 86px 90px 6px 21px 23px 19px 8px 15px 44px 7px 15px 68px 7px 21px 6px 21px 6px 16px 46px 16px 44px 46px 7px 20px 7px 22px 20px 10px 14px;
}

.sep {
  width: 1px;
  height: 18px;
  background: #dcdcdc;
}

.props .sep {
  height: 30px;
}

.pressed {
  width: 18px;
  height: 18px;
  display: grid;
  place-items: center;
  background: #fff;
  border: 1px solid #c4c4c4;
}

.pdf {
  font-size: 7px;
  line-height: 7px;
  padding-bottom: 1px;
}

.field {
  display: flex;
  background: #fff;
  border: 1px solid #bcbcbc;
  font-size: 8.600px;
}

.field span {
  flex: 1;
  padding-left: 3px;
  align-self: center;
}

.field b {
  width: 15px;
  background: #f2f2f2;
  border-left: 1px solid #c8c8c8;
  display: grid;
  place-items: center;
}

.zoom-field {
  width: 73px;
  height: 18px;
}

.zoom-field b {
  background: #e8e8e8;
}

.spin b {
  align-content: space-evenly;
}

.spin b::before,
.spin b::after {
  content: "";
  width: 4px;
  height: 2px;
  background: #222;
  clip-path: polygon(50% 0, 100% 100%, 0 100%);
}

.spin b::after {
  clip-path: polygon(0 0, 100% 0, 50% 100%);
}

.steps {
  width: 40px;
  height: 19px;
}

.offset {
  width: 64px;
  height: 19px;
}

.preset {
  width: 81px;
  height: 19px;
  padding: 0 4px 0 2px;
  display: flex;
  align-items: center;
  justify-content: space-between;
  background: #eaeaea;
  border: 1px solid #bdbdbd;
}

.pair {
  width: 82px;
  height: 25px;
  display: grid;
  grid-template: 12px 13px / 8px 74px;
  align-items: center;
}

.pair.size {
  width: 85px;
  grid-template-columns: 11px 74px;
}

.pair em {
  height: 13px;
  padding-left: 3px;
  background: #fff;
  border: 1px solid #c6c6c6;
  font-style: normal;
  font-size: 8.600px;
  line-height: 11px;
}

.color {
  width: 41px;
  height: 19px;
  display: flex;
  border: 1px solid #c2c2c2;
  background: #fff;
}

.color s {
  width: 22px;
  margin: 2px 1px;
  background: #151515;
}

.color b {
  flex: 1;
  display: grid;
  place-items: center;
  background: #efefef;
  border-left: 1px solid #ccc;
}

.color .caret {
  width: 6px;
}

/* Workspace */
.workspace {
  position: relative;
  height: 566px;
  display: flex;
}

.toolbox {
  width: 24px;
  padding: 5px 0 0 5px;
  border-right: 1px solid #ddd;
  display: grid;
  align-content: start;
  grid-template-rows: 22px 20px 7px 23px 19px 8px 22px 22px 22px 22px 20px 7px 21px 6px 23px 19px 8px 21px 21px 6px 23px 22px 20px 10px 14px;
}

.tool {
  position: relative;
  width: 14px;
  height: 14px;
}

.tool.active {
  background: #fff;
  box-shadow: 0 0 0 2px #fff, 0 0 0 3px #c4c4c4;
}

.fly::after {
  content: "";
  position: absolute;
  right: -2px;
  bottom: -2px;
  width: 4px;
  height: 4px;
  background: #111;
  clip-path: polygon(100% 0, 100% 100%, 0 100%);
}

.hsep {
  width: 18px;
  height: 1px;
  margin-left: -2px;
  background: #d8d8d8;
}

.document {
  width: 1013px;
  display: flex;
  flex-direction: column;
}

.tabs {
  height: 16px;
  display: flex;
  background: #e8e8e8;
  border-bottom: 1px solid #4cb0cf;
}

.tab {
  width: 93px;
  display: flex;
  align-items: center;
  gap: 3px;
  padding-left: 4px;
  background: #cfe0fb;
  font-size: 8.100px;
}

.tab-add {
  width: 15px;
  display: grid;
  place-items: center;
  background: #d6d6d6;
}

.ruler-top {
  width: 1013px;
  height: 12px;
}

.ruler-text {
  font-size: 6.5px;
  fill: #8a8a8a;
  text-anchor: middle;
}

.ruler-top .ruler-text text {
  transform: translateY(115.5px);
}

.canvas-row {
  height: 509px;
  display: flex;
}

.ruler-left {
  width: 12px;
  height: 509px;
}

.canvas {
  width: 988px;
  height: 509px;
  background: #fff;
}

.shapes {
  fill: none;
  stroke: #4c4c4c;
  stroke-width: 0.85px;
}

.vscroll {
  width: 12px;
  display: flex;
  flex-direction: column;
  background: #f0f0f0;
}

.vscroll i {
  flex: 1;
  background: #cbcbcb;
}

.page-row {
  height: 14px;
  display: flex;
  border-bottom: 1px solid #ddd;
}

.page-nav {
  width: 129px;
  margin-left: 11px;
  border-left: 1px solid #888;
  border-top: 1px solid #888;
  padding: 0 20px 0 1px;
  display: flex;
  align-items: center;
  justify-content: space-between;
}

.page-tab {
  width: 64px;
  margin-left: -12px;
}

.page-tab + .grip {
  flex: 1;
  border-top: 1px solid #888;
  border-right: 1px solid #888;
  background-repeat: repeat-y;
  background-position: right 3px top;
}

.page-tab text {
  fill: #222;
}

.hscroll {
  width: 484px;
  height: 13px;
  padding: 1px 0;
  display: flex;
  background: #fff;
}

.hscroll svg {
  background: #f0f0f0;
}

.hscroll i {
  width: 360px;
  margin: 0 auto 0 30px;
  background: #cacaca;
}

.navigator {
  width: 12px;
  height: 12px;
  margin: 1px 1px 0 2px;
}

.color-row {
  height: 15px;
  display: flex;
  align-items: center;
  border-bottom: 1px solid #e0e0e0;
}

.color-row .grip {
  width: 4px;
  height: 13px;
  margin: 0 4px 0 1px;
}

.color-row .pencil {
  margin: 0 6px 0 5px;
}

.color-row .ic {
  margin-left: 5px;
}

.color-row em {
  flex: 1;
  padding-left: 295px;
  color: #aaa;
  font-size: 8.480px;
}

.color-row svg:last-child {
  margin-right: 7px;
}

.pencil {
  color: #444;
}

/* Docker */
.docker {
  width: 211px;
  border-left: 1px solid #ccc;
  padding-left: 3px;
  display: flex;
  flex-direction: column;
}

.docker-title {
  position: relative;
  z-index: 1;
  height: 15px;
  margin: 0 -17px 0 -3px;
  padding: 0 4px 0 3px;
  display: flex;
  align-items: center;
  gap: 6px;
  background: #e9e9e9;
  border-bottom: 1px solid #c2c2c2;
  font-size: 8.100px;
}

.docker-title span {
  flex: 1;
}

.mode {
  height: 51px;
  margin-right: 2px;
  display: flex;
  justify-content: space-between;
  border-bottom: 1px solid #dcdcdc;
}

.radios {
  padding: 3px 0 0 2px;
  font-size: 8.100px;
}

.radios label {
  height: 15.700px;
  display: flex;
  align-items: center;
  gap: 3px;
}

.radio {
  width: 10px;
  height: 10px;
  border: 1px solid #aaa;
  border-radius: 50%;
  background: #fff;
}

.radio.on {
  background: radial-gradient(#000 2.800px, #fff 3.400px);
}

.preview {
  width: 44px;
  height: 44px;
  margin-top: 3px;
}

.preview text {
  font-size: 10px;
  font-weight: bold;
  fill: #2b3f9b;
}

.radius {
  margin-top: 5px;
  height: 19px;
  display: flex;
  align-items: center;
}

.radius > span {
  width: 50px;
  margin-right: 3px;
  text-align: right;
}

.docker .field {
  width: 84px;
  height: 19px;
}

.group-title {
  height: 14px;
  margin: 3px 3px 0 1px;
  display: flex;
  gap: 11px;
}

.group-title span {
  padding-top: 1px;
}

.group-title::after {
  content: "";
  flex: 1;
  height: 1px;
  background: #dcdcdc;
}

.lengths {
  height: 46px;
  margin-right: 3px;
  padding-top: 1px;
  display: grid;
  grid-template: 19px 19px / 50px 84px 10px;
  gap: 3px;
  align-items: center;
  border-bottom: 1px solid #dcdcdc;
}

.lengths > span {
  text-align: right;
  color: #c0c0c0;
}

.lengths .lock {
  grid-area: 1 / 3 / 3 / 4;
  width: 10px;
  height: 30px;
  margin-left: 3px;
}

.field.disabled {
  background: #f3f3f3;
  border-color: #d0d0d0;
  color: #999;
}

.disabled b::before,
.disabled b::after {
  background: #bbb;
}

.apply {
  display: flex;
  justify-content: flex-end;
  padding: 4px 1px 0 0;
}

.apply button {
  width: 71px;
  height: 19px;
  padding: 0;
  border: 1px solid #adadad;
  background: #ececec;
  color: #222;
  font: inherit;
}

.hint {
  height: 43px;
  margin: auto 2px 0 0;
  border-top: 1px solid #dcdcdc;
  display: flex;
  gap: 3px;
  padding-top: 3px;
  font-size: 8.450px;
}

.hint p {
  margin: 1px 0 0;
  line-height: 11.500px;
}

.docker-tabs {
  width: 17px;
  padding-top: 15px;
  background: #e9e9e9;
  border-left: 1px solid #d4d4d4;
}

.docker-tabs > .ic {
  margin: 15px 0 0 1px;
}

.dtab {
  height: 120px;
  padding: 4px 0 0 3px;
  background: #d2d2d2;
}

.dtab.current {
  height: 125px;
  background: #b0b0b0;
}

.dtab span {
  writing-mode: vertical-rl;
  margin-top: 4px;
}

.palette {
  width: 15px;
  display: flex;
  flex-direction: column;
  align-items: center;
}

.palette .grip {
  width: 13px;
  height: 4px;
  margin: 1px 0;
}

.palette .pencil {
  margin: 4px 0;
  color: #bbb;
}

.palette > .ic {
  margin-top: 3px;
}

.swatches {
  width: 14px;
  border: 1px solid #777;
  border-top: 0;
}

.swatches i {
  display: block;
  height: 14px;
  border-bottom: 1px solid #6b6b6b;
}

.swatches .picked {
  border: 1px solid #ddd;
}

.watermark {
  position: absolute;
  left: 947px;
  top: 507px;
  color: rgba(130, 130, 130, 0.6);
}

.watermark strong {
  font-size: 16px;
  line-height: 22px;
  font-weight: normal;
}

.watermark p {
  margin: 0;
  font-size: 11.300px;
  line-height: 17px;
}

/* Status bar */
.status {
  height: 28px;
  padding-left: 5px;
  display: grid;
  align-items: center;
  border-top: 1px solid #e4e4e4;
  grid-template-columns: 101px 28px 770px 26px 16px 19px 130px 8px 15px 19px auto;
}

.status s {
  width: 16px;
  height: 16px;
  background: #151515;
}

/* Taskbar */
.taskbar {
  height: 33px;
  display: flex;
  justify-content: space-between;
  background: #020205;
  color: #fff;
}

.apps {
  display: grid;
  align-items: center;
  justify-items: center;
  grid-template-columns: 40px 40px 40px 43px 40px 42px 40px 44px 40px 42px 40px 42px 42px 42px 40px 42px;
}

.apps svg {
  width: 20px;
  height: 20px;
}

.clip {
  font-size: 8px;
  font-weight: bold;
}

.running {
  height: 33px;
  width: 41px;
  display: grid;
  place-items: center;
  border-bottom: 2px solid #76b1e5;
}

.running.current {
  background: #33353a;
}

.running.rec {
  width: 35px;
}

.tray {
  width: 195px;
  display: grid;
  align-items: center;
  grid-template-columns: 20px 21px 20px 20px 23px 24px 63px 1px;
}

.tray svg {
  width: 14px;
  height: 14px;
}

.tray span {
  font-size: 9.300px;
}

.clock {
  text-align: center;
  font-size: 8.900px;
  line-height: 14px;
}

.tray i {
  height: 33px;
  background: #555;
}
```
